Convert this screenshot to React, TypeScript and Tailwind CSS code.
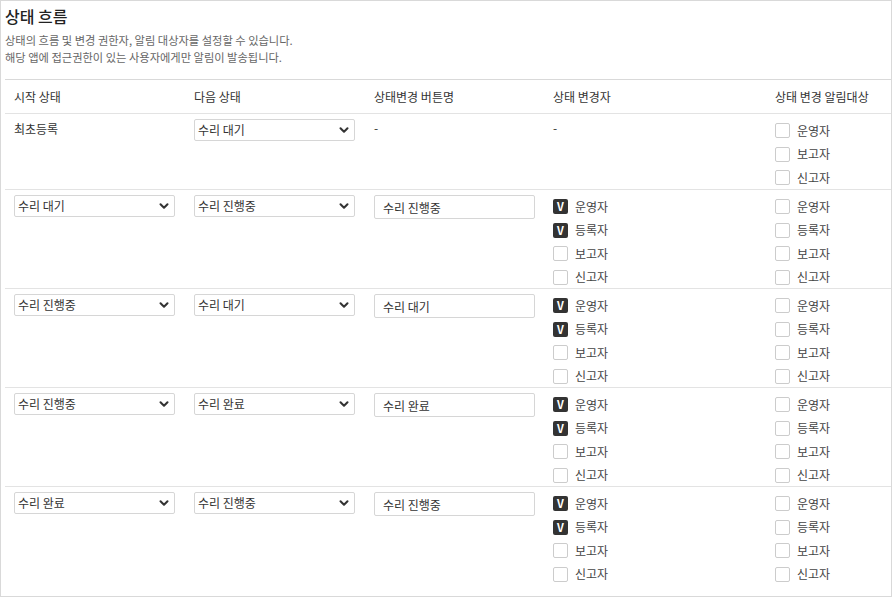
import { ChevronDown } from "lucide-react";

type Row = {
  from: string | null;
  to: string;
  button: string | null;
  changers: boolean;
  notify: string[];
};

const ROWS: Row[] = [
  { from: null, to: "수리 대기", button: null, changers: false, notify: ["운영자", "보고자", "신고자"] },
  { from: "수리 대기", to: "수리 진행중", button: "수리 진행중", changers: true, notify: ["운영자", "등록자", "보고자", "신고자"] },
  { from: "수리 진행중", to: "수리 대기", button: "수리 대기", changers: true, notify: ["운영자", "등록자", "보고자", "신고자"] },
  { from: "수리 진행중", to: "수리 완료", button: "수리 완료", changers: true, notify: ["운영자", "등록자", "보고자", "신고자"] },
  { from: "수리 완료", to: "수리 진행중", button: "수리 진행중", changers: true, notify: ["운영자", "등록자", "보고자", "신고자"] },
];

const OPTIONS = ["수리 대기", "수리 진행중", "수리 완료"];
const CHANGERS = [
  { label: "운영자", on: true },
  { label: "등록자", on: true },
  { label: "보고자", on: false },
  { label: "신고자", on: false },
];

function Select({ value }: { value: string }) {
  return (
    <div className="relative w-[161px]">
      <select
        defaultValue={value}
        className="block h-[22px] w-full appearance-none rounded-[2px] border border-[#d6d6d6] bg-white pl-[3px] text-[12px] leading-none text-[#333] outline-none"
      >
        {OPTIONS.map((o) => (
          <option key={o}>{o}</option>
        ))}
      </select>
      <ChevronDown className="pointer-events-none absolute right-[4px] top-[4px] size-[14px] text-[#333]" strokeWidth={3.5} />
    </div>
  );
}

function Check({ label, on }: { label: string; on: boolean }) {
  return (
    <label className="flex h-[23.5px] items-center gap-[7px] text-[12px] text-[#444]">
      {on ? (
        <span className="flex size-[15px] items-center justify-center rounded-[2px] bg-[#333] text-[11px] font-bold leading-none text-white">V</span>
      ) : (
        <span className="size-[15px] rounded-[2px] border border-[#ccc] bg-white" />
      )}
      {label}
    </label>
  );
}

export default function App() {
  return (
    <div
      className="h-[597px] w-[892px] border border-[#d9d9d9] bg-white text-[#333]"
      style={{ fontFamily: '"Noto Sans CJK KR", "Noto Sans", sans-serif' }}
    >
      {/* Header */}
      <div className="pl-[4px] pt-[3px]">
        <h2 className="text-[16px] font-medium leading-[24px] text-[#222]">상태 흐름</h2>
        <p className="mt-[4px] text-[11.25px] leading-[17px] text-[#666]">
          상태의 흐름 및 변경 권한자, 알림 대상자를 설정할 수 있습니다.
          <br />
          해당 앱에 접근권한이 있는 사용자에게만 알림이 발송됩니다.
        </p>
      </div>

      {/* Table */}
      <div className="ml-[4px] mt-[13px] border-t border-[#d9d9d9]">
        <div className="grid h-[34px] grid-cols-[180px_180px_179px_222px_1fr] items-center border-b border-[#e3e3e3] pl-[9px] text-[12px] text-[#333]">
          <span>시작 상태</span>
          <span>다음 상태</span>
          <span>상태변경 버튼명</span>
          <span>상태 변경자</span>
          <span>상태 변경 알림대상</span>
        </div>

        {ROWS.map((r, i) => (
          <div
            key={i}
            className={`grid grid-cols-[180px_180px_179px_222px_1fr] items-start pl-[9px] pt-[5px] ${
              i === 0 ? "h-[76px]" : "h-[99px]"
            } ${i < ROWS.length - 1 ? "border-b border-[#e3e3e3]" : ""}`}
          >
            <div>
              {r.from ? (
                <Select value={r.from} />
              ) : (
                <span className="block pt-[1px] text-[12px] leading-[18px] text-[#333]">최초등록</span>
              )}
            </div>
            <div>
              <Select value={r.to} />
            </div>
            <div>
              {r.button ? (
                <input
                  defaultValue={r.button}
                  className="block h-[24px] w-[161px] rounded-[2px] border border-[#d6d6d6] px-[8px] text-[12px] text-[#333] outline-none"
                />
              ) : (
                <span className="block text-[12px] leading-[18px]">-</span>
              )}
            </div>
            <div>
              {r.changers ? (
                <div className="flex flex-col">
                  {CHANGERS.map((c) => (
                    <Check key={c.label} label={c.label} on={c.on} />
                  ))}
                </div>
              ) : (
                <span className="block text-[12px] leading-[18px]">-</span>
              )}
            </div>
            <div className="flex flex-col">
              {r.notify.map((n) => (
                <Check key={n} label={n} on={false} />
              ))}
            </div>
          </div>
        ))}
      </div>
    </div>
  );
}
